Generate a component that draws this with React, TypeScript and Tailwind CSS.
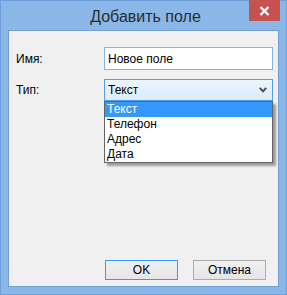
const font = { fontFamily: '"Segoe UI", "Liberation Sans", Arial, sans-serif' };

const items = ["Текст", "Телефон", "Адрес", "Дата"];

export default function App() {
    return (
        <div className="w-[287px] h-[295px] bg-[#8ab6e8] flex flex-col border border-[#6c9fd9] text-black" style={font}>
            {/* title bar */}
            <div className="relative h-[29px] shrink-0 flex items-center justify-center">
                <span className="text-[16px] text-[#2c2c2c] leading-none pt-[3px] pl-[4px]">Добавить поле</span>
                <button className="absolute top-[-1px] right-[6px] w-[31px] h-[21px] bg-[#c75050] flex items-center justify-center">
                    <svg width="11" height="10" viewBox="0 0 11 10">
                        <path d="M1.5 1 L9.5 9 M9.5 1 L1.5 9" stroke="#fff" strokeWidth="2.4" />
                    </svg>
                </button>
            </div>

            {/* client area */}
            <div className="flex-1 mx-[7px] mb-[7px] border border-[#729fd4] bg-[#f0f0f0] flex flex-col pt-[16px] pl-[7px] pr-[5px] pb-[6px] text-[12px]">
                <div className="flex items-center h-[23px]">
                    <label className="w-[88px] shrink-0">Имя:</label>
                    <div className="w-[169px] shrink-0 h-[23px] border border-[#7eb4ea] bg-white flex items-center px-[3px]">Новое поле</div>
                </div>

                <div className="flex items-center h-[22px] mt-[9px]">
                    <label className="w-[88px] shrink-0">Тип:</label>
                    <div className="relative w-[169px] shrink-0 h-[22px]">
                        <div className="w-full h-full border border-[#569de5] bg-gradient-to-b from-[#ecf4fc] to-[#dcecfc] flex items-center justify-between pl-[3px] pr-[5px]">
                            <span>Текст</span>
                            <svg width="8" height="6" viewBox="0 0 8 6">
                                <path d="M0.8 0.8 L4 4.3 L7.2 0.8" stroke="#4d4d4d" strokeWidth="2" fill="none" />
                            </svg>
                        </div>
                        <ul className="absolute left-0 top-full w-[169px] h-[62px] bg-white border border-[#646464] shadow-[3px_3px_2px_rgba(0,0,0,0.35)] z-10">
                            {items.map((it, i) => (
                                <li key={it} className={`h-[15px] leading-[15px] pl-[2px] ${i === 0 ? "bg-[#3399ff] text-white" : ""}`}>{it}</li>
                            ))}
                        </ul>
                    </div>
                </div>

                <div className="mt-auto flex justify-end gap-[15px] pr-[7px]">
                    <button className="w-[73px] h-[20px] border border-[#3399ff] bg-gradient-to-b from-[#f0f0f0] to-[#e5e5e5]">OK</button>
                    <button className="w-[73px] h-[20px] border border-[#acacac] bg-gradient-to-b from-[#f0f0f0] to-[#e5e5e5]">Отмена</button>
                </div>
            </div>
        </div>
    );
}
